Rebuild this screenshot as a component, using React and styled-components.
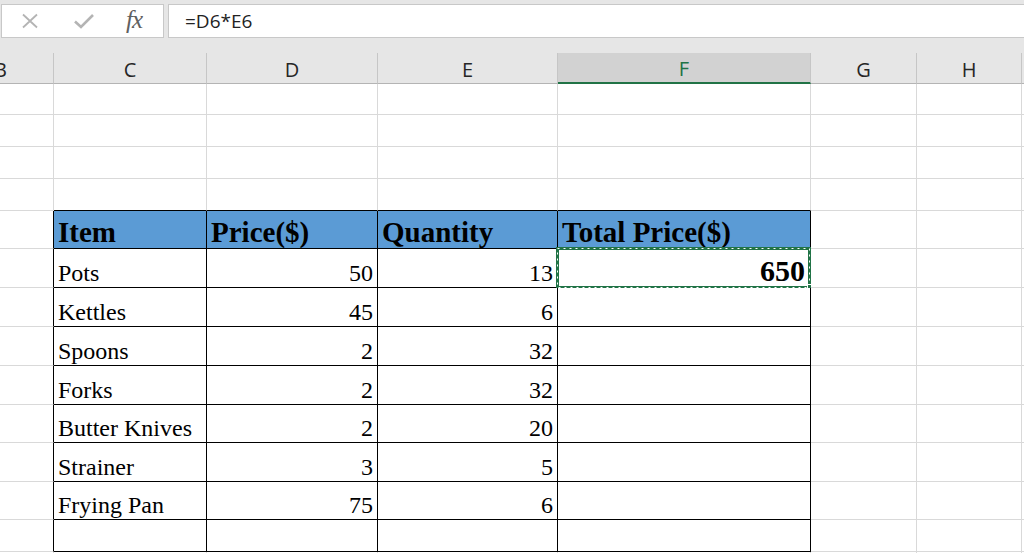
import React from "react";
import styled, { createGlobalStyle } from "styled-components";

const GlobalStyle = createGlobalStyle`
    html, body {
        margin: 0;
        padding: 0;
        background: #ffffff;
        overflow: hidden;
    }
`;

const GREEN = "#217346";

// column widths, B is partly off screen on the left
const columns = [
    { key: "B", w: 106 },
    { key: "C", w: 153 },
    { key: "D", w: 171 },
    { key: "E", w: 180 },
    { key: "F", w: 253 },
    { key: "G", w: 106 },
    { key: "H", w: 105 },
    { key: "I", w: 120 },
];

const items = [
    ["Pots", 50, 13, 650],
    ["Kettles", 45, 6],
    ["Spoons", 2, 32],
    ["Forks", 2, 32],
    ["Butter Knives", 2, 20],
    ["Strainer", 3, 5],
    ["Frying Pan", 75, 6],
];
const itemHeights = [39, 39, 39, 39, 38, 39, 38];

const tableCols = ["C", "D", "E", "F"];
const labels = ["Item", "Price($)", "Quantity", "Total Price($)"];

export default function App() {
    return (
        <Page>
            <GlobalStyle />
            <FormulaBar>
                <ButtonBox>
                    <ToolIcon viewBox="0 0 18 16" $w={18} $gap={35}>
                        <path d="M2 1.5 L16 14.5 M16 1.5 L2 14.5" stroke="#b4b4b4" strokeWidth="1.8" fill="none" />
                    </ToolIcon>
                    <ToolIcon viewBox="0 0 20 15" $w={20} $gap={32}>
                        <path d="M1 8 L7 13.5 L19 1.5" stroke="#b4b4b4" strokeWidth="2.6" fill="none" />
                    </ToolIcon>
                    <Fx>fx</Fx>
                </ButtonBox>
                <FormulaInput>=D6*E6</FormulaInput>
            </FormulaBar>

            <Sheet>
                <HeaderRow>
                    {columns.map((c) => (
                        <ColHeader key={c.key} $w={c.w} $selected={c.key === "F"}>
                            {c.key !== "I" && c.key}
                        </ColHeader>
                    ))}
                </HeaderRow>

                {[31, 32, 32].map((h, i) => (
                    <Row key={"e" + i} $h={h}>
                        {columns.map((c) => (
                            <Cell key={c.key} $w={c.w} />
                        ))}
                    </Row>
                ))}

                <Row $h={32}>
                    {columns.map((c) => (
                        <Cell key={c.key} $w={c.w} $darkBottom={tableCols.includes(c.key)} />
                    ))}
                </Row>

                <Row $h={38}>
                    {columns.map((c) => {
                        const idx = tableCols.indexOf(c.key);
                        const inTable = idx >= 0;
                        return (
                            <Cell
                                key={c.key}
                                $w={c.w}
                                $bg={inTable ? "#5b9bd5" : undefined}
                                $darkRight={c.key === "B" || inTable}
                                $darkBottom={inTable}
                            >
                                {inTable && <HeadText>{labels[idx]}</HeadText>}
                            </Cell>
                        );
                    })}
                </Row>

                {items.map((it, r) => (
                    <Row key={it[0]} $h={itemHeights[r]}>
                        {columns.map((c) => {
                            const idx = tableCols.indexOf(c.key);
                            const inTable = idx >= 0;
                            const value = inTable ? it[idx] : undefined;
                            const isTotal = c.key === "F" && value !== undefined;
                            return (
                                <Cell
                                    key={c.key}
                                    $w={c.w}
                                    $align={idx === 0 ? "flex-start" : "flex-end"}
                                    $darkRight={c.key === "B" || inTable}
                                    $darkBottom={inTable}
                                >
                                    {isTotal ? (
                                        <>
                                            <TotalText>{value}</TotalText>
                                            <Ants viewBox="0 0 255 42">
                                                <rect x="1.5" y="1.5" width="252" height="39" fill="none" stroke={GREEN} strokeWidth="3" />
                                                <rect x="1.5" y="1.5" width="252" height="39" fill="none" stroke="#ffffff" strokeWidth="1" strokeDasharray="2 4" />
                                            </Ants>
                                            <Handle />
                                        </>
                                    ) : (
                                        value !== undefined && <CellText>{value}</CellText>
                                    )}
                                </Cell>
                            );
                        })}
                    </Row>
                ))}

                <Row $h={32}>
                    {columns.map((c) => {
                        const inTable = tableCols.includes(c.key);
                        return (
                            <Cell
                                key={c.key}
                                $w={c.w}
                                $darkRight={c.key === "B" || inTable}
                                $darkBottom={inTable}
                            />
                        );
                    })}
                </Row>
                <Row $h={32}>
                    {columns.map((c) => (
                        <Cell key={c.key} $w={c.w} />
                    ))}
                </Row>
            </Sheet>
        </Page>
    );
}

const Page = styled.div`
    width: 1024px;
    height: 553px;
    overflow: hidden;
    background: #ffffff;
    font-family: "Liberation Serif", "Times New Roman", serif;
`;

const FormulaBar = styled.div`
    display: flex;
    align-items: flex-start;
    height: 53px;
    box-sizing: border-box;
    padding: 4px 0 0 1px;
    background: #e6e6e6;
`;

const ButtonBox = styled.div`
    display: flex;
    align-items: center;
    width: 163px;
    height: 34px;
    box-sizing: border-box;
    padding-left: 19px;
    background: #ffffff;
    border: 1px solid #c8c8c8;
`;

const ToolIcon = styled.svg`
    width: ${(p) => p.$w}px;
    height: 16px;
    margin-right: ${(p) => p.$gap}px;
    flex-shrink: 0;
`;

const Fx = styled.span`
    font-family: "Liberation Serif", "Times New Roman", serif;
    font-style: italic;
    font-size: 25px;
    color: #606060;
    letter-spacing: -1px;
    line-height: 1;
    margin-top: -3px;
`;

const FormulaInput = styled.div`
    flex: 1;
    height: 34px;
    margin-left: 4px;
    box-sizing: border-box;
    padding-left: 16px;
    background: #ffffff;
    border: 1px solid #c8c8c8;
    border-right: none;
    display: flex;
    align-items: center;
    font-family: "Open Sans", "Noto Sans", sans-serif;
    font-size: 19px;
    color: #222;
`;

const Sheet = styled.div`
    margin-left: -52px;
`;

const HeaderRow = styled.div`
    display: flex;
    height: 31px;
    background: #e6e6e6;
`;

const ColHeader = styled.div`
    width: ${(p) => p.$w}px;
    flex-shrink: 0;
    box-sizing: border-box;
    display: flex;
    align-items: center;
    justify-content: center;
    padding-top: 2px;
    border-right: 1px solid #c6c6c6;
    border-bottom: ${(p) => (p.$selected ? `2px solid ${GREEN}` : "1px solid #b4b4b4")};
    background: ${(p) => (p.$selected ? "#d2d2d2" : "#e6e6e6")};
    color: ${(p) => (p.$selected ? GREEN : "#262626")};
    font-family: "Open Sans", "Noto Sans", sans-serif;
    font-size: 20px;
`;

const Row = styled.div`
    display: flex;
    height: ${(p) => p.$h}px;
`;

const Cell = styled.div`
    position: relative;
    width: ${(p) => p.$w}px;
    flex-shrink: 0;
    box-sizing: border-box;
    display: flex;
    align-items: flex-end;
    justify-content: ${(p) => p.$align || "flex-start"};
    padding: 0 4px 2px 4px;
    background: ${(p) => p.$bg || "#ffffff"};
    border-right: 1px solid ${(p) => (p.$darkRight ? "#000" : "#d9d9d9")};
    border-bottom: 1px solid ${(p) => (p.$darkBottom ? "#000" : "#d9d9d9")};
`;

const CellText = styled.span`
    font-size: 24px;
    line-height: 1;
    color: #000;
    white-space: nowrap;
`;

const HeadText = styled.span`
    font-size: 29px;
    font-weight: bold;
    line-height: 1;
    color: #000;
    white-space: nowrap;
    margin-bottom: -1px;
`;

const TotalText = styled.span`
    font-size: 30px;
    font-weight: bold;
    line-height: 1;
    color: #000;
    margin-right: 1px;
    margin-bottom: -1px;
`;

const Ants = styled.svg`
    position: absolute;
    top: -2px;
    left: -2px;
    width: 255px;
    height: 42px;
    pointer-events: none;
`;

const Handle = styled.span`
    position: absolute;
    right: -4px;
    bottom: -4px;
    width: 5px;
    height: 5px;
    background: ${GREEN};
    border: 1px solid #ffffff;
`;
